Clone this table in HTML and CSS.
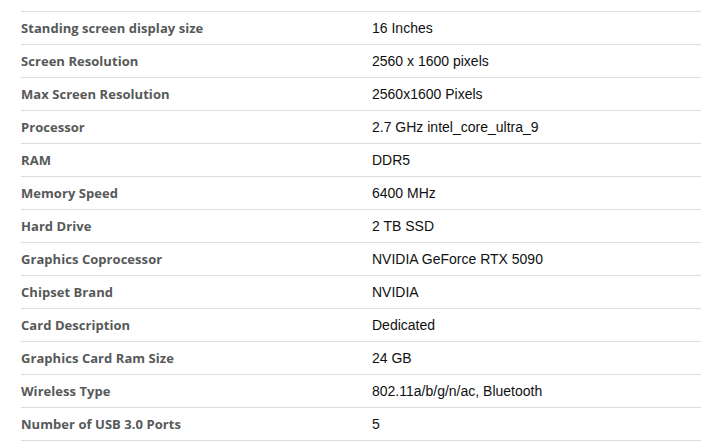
FILE: index.html
```html
<!DOCTYPE html>
<html>
<head>
<meta charset="utf-8">
<link rel="stylesheet" href="styles.css">
</head>
<body>
<table class="specs">
<tbody>
<tr><th>Standing screen display size</th><td>16 Inches</td></tr>
<tr><th>Screen Resolution</th><td>2560 x 1600 pixels</td></tr>
<tr><th>Max Screen Resolution</th><td>2560x1600 Pixels</td></tr>
<tr><th>Processor</th><td>2.7 GHz intel_core_ultra_9</td></tr>
<tr><th>RAM</th><td>DDR5</td></tr>
<tr><th>Memory Speed</th><td>6400 MHz</td></tr>
<tr><th>Hard Drive</th><td>2 TB SSD</td></tr>
<tr><th>Graphics Coprocessor</th><td>NVIDIA GeForce RTX 5090</td></tr>
<tr><th>Chipset Brand</th><td>NVIDIA</td></tr>
<tr><th>Card Description</th><td>Dedicated</td></tr>
<tr><th>Graphics Card Ram Size</th><td>24 GB</td></tr>
<tr><th>Wireless Type</th><td>802.11a/b/g/n/ac, Bluetooth</td></tr>
<tr><th>Number of USB 3.0 Ports</th><td>5</td></tr>
</tbody>
</table>
</body>
</html>
```
FILE: styles.css
```css
html, body {
  margin: 0;
  padding: 0;
  background: #fff;
}
body {
  padding: 11px 7px 0 21px;
}
.specs {
  width: 680px;
  border-collapse: collapse;
  border-top: 1px solid #dddddd;
}
.specs tr {
  border-bottom: 1px solid #dddddd;
  height: 33px;
}
.specs th,
.specs td {
  padding: 0;
  text-align: left;
  vertical-align: middle;
}
.specs th {
  width: 351px;
  font-family: "Open Sans", "Liberation Sans", sans-serif;
  font-weight: 700;
  font-size: 13px;
  letter-spacing: 0.05px;
  color: #565959;
}
.specs td {
  font-family: "Liberation Sans", Arial, sans-serif;
  font-size: 14px;
  color: #0f1111;
}
```
